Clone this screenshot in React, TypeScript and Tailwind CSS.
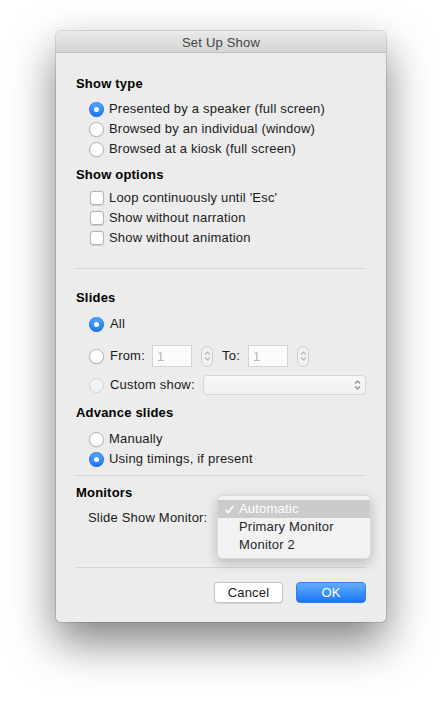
import clsx from 'clsx';

const font = { fontFamily: '"Liberation Sans", Arial, sans-serif' };

const Radio = ({ checked, disabled }: { checked?: boolean; disabled?: boolean }) =>
  checked ? (
    <span className="w-[15px] h-[15px] shrink-0 rounded-full bg-gradient-to-b from-[#55a8ff] to-[#1876f2] flex items-center justify-center shadow-[inset_0_0_0_1px_rgba(20,90,200,0.35)]">
      <span className="w-[5px] h-[5px] rounded-full bg-white" />
    </span>
  ) : (
    <span
      className={clsx(
        'w-[15px] h-[15px] shrink-0 rounded-full border',
        disabled
          ? 'bg-[#f3f3f3] border-[#d2d2d2]'
          : 'bg-white border-[#b3b3b3] shadow-[0_0.5px_1px_rgba(0,0,0,0.12)]'
      )}
    />
  );

const Checkbox = () => (
  <span className="w-[14px] h-[14px] shrink-0 rounded-[3px] bg-white border border-[#b3b3b3] shadow-[0_0.5px_1px_rgba(0,0,0,0.12)]" />
);

const UpDown = ({ color }: { color: string }) => (
  <svg width="7" height="12" viewBox="0 0 7 12" fill="none" stroke={color} strokeWidth="1.1">
    <path d="M1 4.5 L3.5 2 L6 4.5" />
    <path d="M1 7.5 L3.5 10 L6 7.5" />
  </svg>
);

const Stepper = () => (
  <span className="w-[12px] h-[21px] rounded-[6px] border border-[#cdcdcd] bg-[#f1f1f1] flex items-center justify-center">
    <UpDown color="#b8b8b8" />
  </span>
);

const NumberBox = () => (
  <span className="w-[40px] h-[22px] bg-[#fbfbfb] border border-[#d3d3d3] flex items-center pl-[4px] pt-px text-[#b5b5b5]">
    1
  </span>
);

const Heading = ({ children, className }: { children: string; className?: string }) => (
  <div className={clsx('h-5 flex items-center font-bold text-black', className)}>{children}</div>
);

const RadioRow = ({ label, checked, disabled }: { label: string; checked?: boolean; disabled?: boolean }) => (
  <div className="h-5 flex items-center pl-[13px] gap-[5px]">
    <Radio checked={checked} disabled={disabled} />
    <span>{label}</span>
  </div>
);

const CheckRow = ({ label }: { label: string }) => (
  <div className="h-5 flex items-center pl-[14px] gap-[5px]">
    <Checkbox />
    <span>{label}</span>
  </div>
);

const Separator = ({ className }: { className?: string }) => (
  <div className={clsx('h-px bg-[#d5d5d5]', className)} />
);

// open popup for the monitor choice, floating over the dialog
const MonitorMenu = () => (
  <div className="absolute left-[141px] top-[-13px] w-[154px] rounded-[5px] bg-[#f2f2f2] border border-[#dadada] shadow-[0_4px_12px_rgba(0,0,0,0.22)] pt-[4px] pb-[4px]">
    <div className="h-[18px] bg-[#cbcbcb] flex items-center text-white">
      <span className="w-[21px] flex justify-center pl-[1px]">
        <svg width="9" height="9" viewBox="0 0 9 9" fill="none" stroke="white" strokeWidth="1.4" strokeLinecap="round">
          <path d="M1 5 L3.3 7.6 L8 1.2" />
        </svg>
      </span>
      Automatic
    </div>
    <div className="h-[18px] flex items-center pl-[21px] text-[#262626]">Primary Monitor</div>
    <div className="h-[18px] flex items-center pl-[21px] text-[#262626]">Monitor 2</div>
  </div>
);

export default function App() {
  return (
    <div className="w-[442px] h-[703px] bg-white overflow-hidden text-[13px] tracking-[0.2px] text-[#1a1a1a]" style={font}>
      <div className="ml-[56px] mt-[31px] w-[330px] rounded-[5px] bg-[#ececec] shadow-[0_0_0_1px_rgba(0,0,0,0.12),0_20px_45px_rgba(0,0,0,0.5)]">
        <div className="h-[22px] pt-[2px] rounded-t-[5px] bg-gradient-to-b from-[#ebebeb] to-[#d4d4d4] border-b border-[#bfbfbf] flex items-center justify-center text-[#444]">
          Set Up Show
        </div>

        <div className="px-[20px] pb-[19px] flex flex-col">
          <Heading className="mt-[21px]">Show type</Heading>
          <div className="mt-[5px] flex flex-col">
            <RadioRow label="Presented by a speaker (full screen)" checked />
            <RadioRow label="Browsed by an individual (window)" />
            <RadioRow label="Browsed at a kiosk (full screen)" />
          </div>

          <Heading className="mt-[6px]">Show options</Heading>
          <div className="mt-[3px] flex flex-col">
            <CheckRow label="Loop continuously until 'Esc'" />
            <CheckRow label="Show without narration" />
            <CheckRow label="Show without animation" />
          </div>

          <Separator className="mt-[20px]" />

          <Heading className="mt-[19px]">Slides</Heading>
          <div className="mt-[6px] h-5 flex items-center pl-[13px] gap-[6px]">
            <Radio checked />
            <span>All</span>
          </div>
          <div className="mt-[11px] h-[22px] flex items-center pl-[13px]">
            <Radio />
            <span className="ml-[6px] w-[42px]">From:</span>
            <NumberBox />
            <span className="ml-[9px]">
              <Stepper />
            </span>
            <span className="ml-[9px] w-[26px]">To:</span>
            <NumberBox />
            <span className="ml-[9px]">
              <Stepper />
            </span>
          </div>
          <div className="mt-[8px] h-5 flex items-center pl-[13px]">
            <Radio disabled />
            <span className="ml-[6px] w-[93px]">Custom show:</span>
            <div className="flex-1 h-5 rounded-[4px] border border-[#d6d6d6] bg-gradient-to-b from-[#f8f8f8] to-[#f1f1f1] flex items-center justify-end pr-[4px]">
              <UpDown color="#8a8a8a" />
            </div>
          </div>

          <Heading className="mt-[8px]">Advance slides</Heading>
          <div className="mt-[6px] flex flex-col">
            <RadioRow label="Manually" />
            <RadioRow label="Using timings, if present" checked />
          </div>

          <Separator className="mt-[6px]" />

          <Heading className="mt-[7px]">Monitors</Heading>
          <div className="mt-[5px] h-5 flex items-center pl-[12px] relative">
            <span>Slide Show Monitor:</span>
            <MonitorMenu />
          </div>

          <Separator className="mt-[39px]" />

          <div className="mt-[14px] flex justify-end gap-[13px]">
            <button className="w-[69px] h-[21px] pt-px rounded-[4px] bg-white border border-[#c4c4c4] shadow-[0_0.5px_1px_rgba(0,0,0,0.1)] text-[#1a1a1a] flex items-center justify-center">
              Cancel
            </button>
            <button className="w-[70px] h-[21px] pt-px rounded-[4px] bg-gradient-to-b from-[#62aefc] to-[#1a74fa] border border-[#2a7fef] text-white flex items-center justify-center">
              OK
            </button>
          </div>
        </div>
      </div>
    </div>
  );
}
